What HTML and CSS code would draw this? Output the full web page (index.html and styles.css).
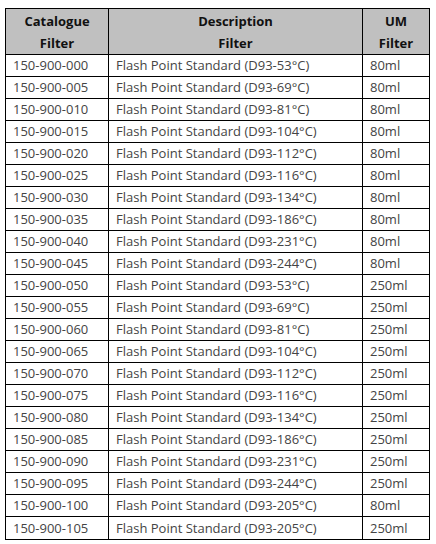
FILE: index.html
```html
<!DOCTYPE html>
<html>
<head>
<meta charset="utf-8">
<link rel="stylesheet" href="styles.css">
</head>
<body>
<table class="grid">
<colgroup><col class="c1"><col class="c2"><col class="c3"></colgroup>
<thead>
<tr><th>Catalogue<br>Filter</th><th>Description<br>Filter</th><th>UM<br>Filter</th></tr>
</thead>
<tbody>
<tr><td>150-900-000</td><td>Flash Point Standard (D93-53°C)</td><td>80ml</td></tr>
<tr><td>150-900-005</td><td>Flash Point Standard (D93-69°C)</td><td>80ml</td></tr>
<tr><td>150-900-010</td><td>Flash Point Standard (D93-81°C)</td><td>80ml</td></tr>
<tr><td>150-900-015</td><td>Flash Point Standard (D93-104°C)</td><td>80ml</td></tr>
<tr><td>150-900-020</td><td>Flash Point Standard (D93-112°C)</td><td>80ml</td></tr>
<tr><td>150-900-025</td><td>Flash Point Standard (D93-116°C)</td><td>80ml</td></tr>
<tr><td>150-900-030</td><td>Flash Point Standard (D93-134°C)</td><td>80ml</td></tr>
<tr><td>150-900-035</td><td>Flash Point Standard (D93-186°C)</td><td>80ml</td></tr>
<tr><td>150-900-040</td><td>Flash Point Standard (D93-231°C)</td><td>80ml</td></tr>
<tr><td>150-900-045</td><td>Flash Point Standard (D93-244°C)</td><td>80ml</td></tr>
<tr><td>150-900-050</td><td>Flash Point Standard (D93-53°C)</td><td>250ml</td></tr>
<tr><td>150-900-055</td><td>Flash Point Standard (D93-69°C)</td><td>250ml</td></tr>
<tr><td>150-900-060</td><td>Flash Point Standard (D93-81°C)</td><td>250ml</td></tr>
<tr><td>150-900-065</td><td>Flash Point Standard (D93-104°C)</td><td>250ml</td></tr>
<tr><td>150-900-070</td><td>Flash Point Standard (D93-112°C)</td><td>250ml</td></tr>
<tr><td>150-900-075</td><td>Flash Point Standard (D93-116°C)</td><td>250ml</td></tr>
<tr><td>150-900-080</td><td>Flash Point Standard (D93-134°C)</td><td>250ml</td></tr>
<tr><td>150-900-085</td><td>Flash Point Standard (D93-186°C)</td><td>250ml</td></tr>
<tr><td>150-900-090</td><td>Flash Point Standard (D93-231°C)</td><td>250ml</td></tr>
<tr><td>150-900-095</td><td>Flash Point Standard (D93-244°C)</td><td>250ml</td></tr>
<tr><td>150-900-100</td><td>Flash Point Standard (D93-205°C)</td><td>80ml</td></tr>
<tr><td>150-900-105</td><td>Flash Point Standard (D93-205°C)</td><td>250ml</td></tr>
</tbody>
</table>
</body>
</html>
```
FILE: styles.css
```css
html, body { margin: 0; padding: 0; background: #fff; }
body { padding: 8px 0 0 5px; font-family: "Open Sans", "Noto Sans", sans-serif; }
.grid {
  border-collapse: collapse;
  table-layout: fixed;
  width: 424px;
}
.c1 { width: 103px; }
.c2 { width: 254px; }
.c3 { width: 67px; }
.grid th, .grid td {
  border: 1px solid #000;
  padding: 0 0 0 7px;
}
.grid th {
  background: #c0c0c0;
  color: #111;
  font-weight: bold;
  font-size: 13px;
  line-height: 22px;
  height: 45px;
  text-align: center;
  padding: 0;
}
.grid td {
  color: #444;
  font-size: 13px;
  height: 21px;
  line-height: 21px;
  white-space: nowrap;
}
.grid tbody tr:last-child td { height: 22px; }
```
